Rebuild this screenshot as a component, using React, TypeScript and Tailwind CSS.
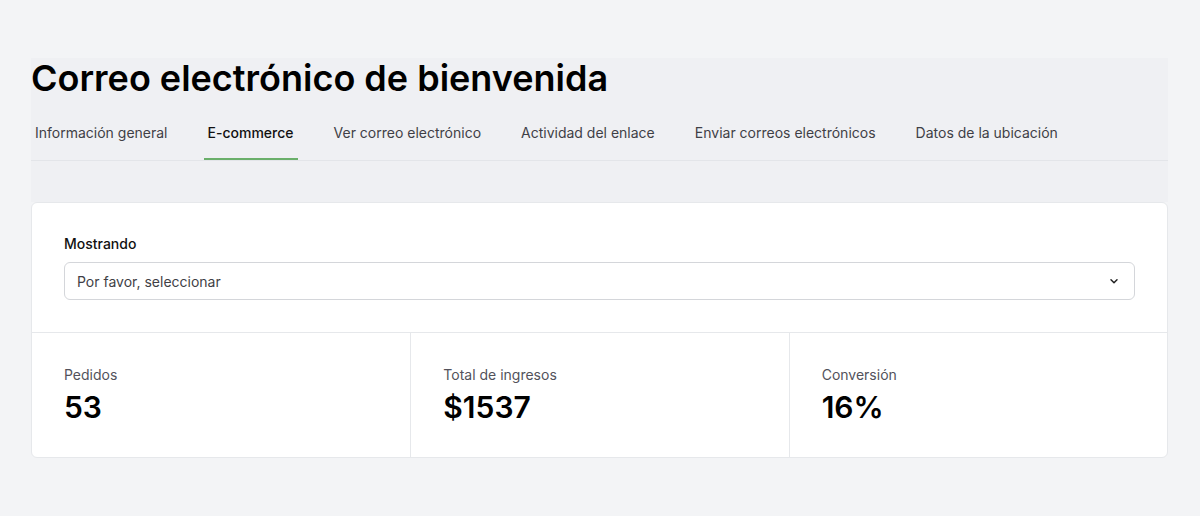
import React from "react";

const tabs = [
  "Información general",
  "E-commerce",
  "Ver correo electrónico",
  "Actividad del enlace",
  "Enviar correos electrónicos",
  "Datos de la ubicación",
];

const stats = [
  { label: "Pedidos", value: "53" },
  { label: "Total de ingresos", value: "$1537" },
  { label: "Conversión", value: "16%" },
];

const App = () => {
  const active = 1;
  return (
    <main className="min-h-[516px] bg-[#f3f4f6] px-[31px] pt-[58px] font-['Inter',sans-serif] text-[#111]">
      <div className="w-[1137px]">
        <div className="bg-[#eff0f3] pb-[41px]">
          <h1 className="text-[36px] font-semibold leading-[40px] text-black">
            Correo electrónico de bienvenida
          </h1>
          <nav className="mt-4 flex gap-8 border-b border-[#e3e5e9]">
            {tabs.map((tab, index) => (
              <span
                key={tab}
                className={`px-1 pb-[15px] pt-[8px] text-[14px] ${
                  index === active
                    ? "border-b-2 border-[#6aaf6a] font-medium text-[#111]"
                    : "border-b-2 border-transparent text-[#3f3f46]"
                }`}
              >
                {tab}
              </span>
            ))}
          </nav>
        </div>

        <div className="rounded-md border border-[#e6e8eb] bg-white">
          <div className="px-8 pb-8 pt-[31px]">
            <label className="block text-[14px] font-medium leading-5 text-[#111]">
              Mostrando
            </label>
            <div className="mt-2 flex h-[38px] items-center justify-between rounded-md border border-[#d4d6da] px-3 text-[14px] text-[#3f3f46]">
              <span>Por favor, seleccionar</span>
              <svg
                width="12"
                height="12"
                viewBox="0 0 20 20"
                fill="none"
                stroke="#222"
                strokeWidth="2.5"
                className="mr-[2px]"
              >
                <path d="M5 8l5 5 5-5" strokeLinecap="round" strokeLinejoin="round" />
              </svg>
            </div>
          </div>
          <div className="grid grid-cols-3 border-t border-[#e6e8eb]">
            {stats.map((s, i) => (
              <div
                key={s.label}
                className={`px-8 pb-[32px] pt-[32px] ${i > 0 ? "border-l border-[#e6e8eb]" : ""}`}
              >
                <div className="text-[14px] leading-5 text-[#52525b]">{s.label}</div>
                <div className="mt-[4px] text-[30px] font-semibold leading-9 text-black">
                  {s.value}
                </div>
              </div>
            ))}
          </div>
        </div>
      </div>
    </main>
  );
};

export default App;
